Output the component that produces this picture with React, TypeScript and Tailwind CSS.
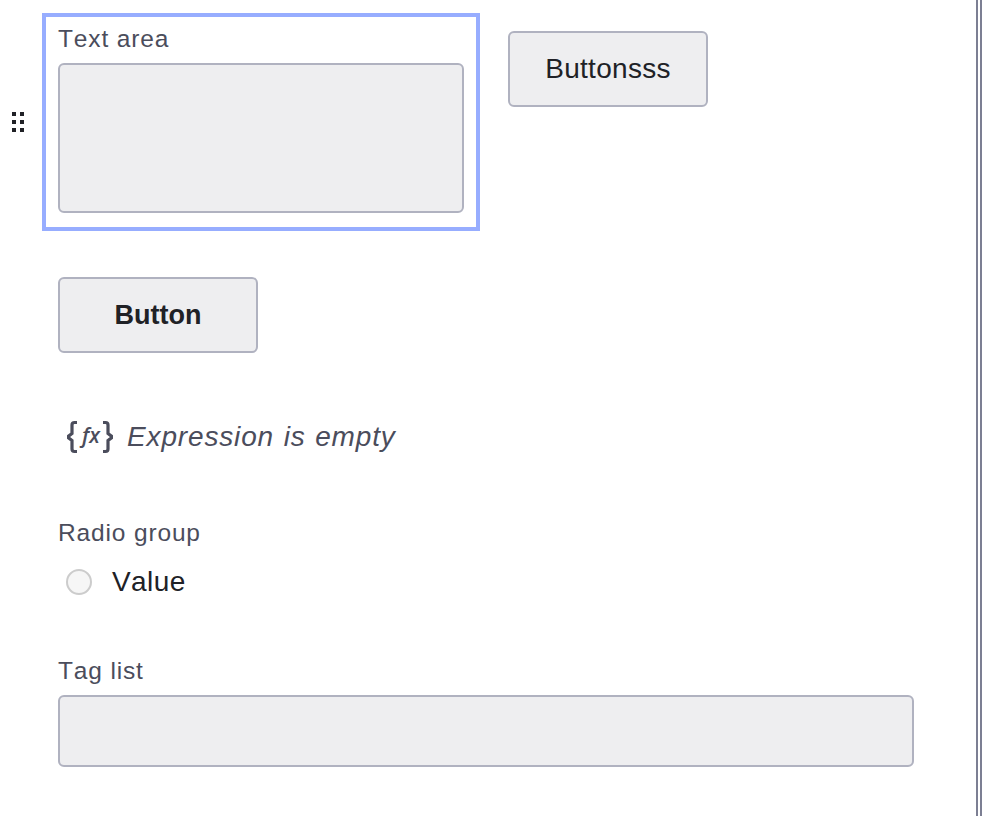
import type { ReactNode } from "react";

function Label({ children }: { children: ReactNode }) {
  return (
    <div className="h-8 text-[24.5px] leading-8 tracking-[0.85px] whitespace-nowrap text-[#4b4d5c] [font-kerning:none]">
      {children}
    </div>
  );
}

function DragHandle() {
  return (
    <div className="grid grid-cols-2 gap-1">
      {[0, 1, 2, 3, 4, 5].map((i) => (
        <span key={i} className="size-1 bg-[#202126]" />
      ))}
    </div>
  );
}

function ExpressionIcon() {
  return (
    <svg width="46" height="34" viewBox="0 0 46 34" fill="none" className="shrink-0">
      <path
        d="M10 2.5H7.5Q5 2.5 5 5V13.5L1.5 16.2V17.8L5 20.5V29Q5 31.5 7.5 31.5H10M36 2.5H38.5Q41 2.5 41 5V13.5L44.5 16.2V17.8L41 20.5V29Q41 31.5 38.5 31.5H36"
        stroke="#4b4d5c"
        strokeWidth="3.2"
      />
      <text x="15" y="23" className="fill-[#4b4d5c] font-['Open_Sans',sans-serif] text-[21px] font-semibold italic">
        fx
      </text>
    </svg>
  );
}

export default function App() {
  return (
    <div className="flex h-[816px] w-[982px] overflow-hidden bg-white font-['Liberation_Sans',Arial,sans-serif] text-[#202126]">
      <main className="flex w-[976px] flex-col items-start pt-[13px]">
        <div className="flex items-start">
          <div className="flex h-[218px] w-[42px] items-center pl-3">
            <DragHandle />
          </div>
          <section className="h-[218px] w-[438px] border-4 border-[#97adff] px-3 pt-[6px]">
            <Label>Text area</Label>
            <div className="mt-2 h-[150px] rounded-[6px] border-2 border-[#b0b2c0] bg-[#eeeef0]" />
          </section>
          <button className="mt-[18px] ml-7 flex h-[76px] w-[200px] items-center justify-center rounded-[6px] border-2 border-[#b0b2c0] bg-[#eeeef0] text-[28px] tracking-[0.3px]">
            Buttonsss
          </button>
        </div>
        <button className="mt-[46px] ml-[58px] flex h-[76px] w-[200px] items-center justify-center rounded-[6px] border-2 border-[#b0b2c0] bg-[#eeeef0] text-[27px] font-bold">
          Button
        </button>
        <div className="mt-[67px] ml-[67px] flex h-[34px] items-center gap-[14px] text-[28px] text-[#4b4d5c]">
          <ExpressionIcon />
          <span className="tracking-[0.85px] whitespace-nowrap italic [word-spacing:1px]">Expression is empty</span>
        </div>
        <section className="mt-[63px] ml-[58px]">
          <Label>Radio group</Label>
          <div className="mt-[15px] flex h-9 items-center gap-5 pl-2">
            <span className="size-[26px] rounded-full border-2 border-[#cccccc] bg-[#f6f6f6]" />
            <span className="text-[28px] leading-9 tracking-[0.4px] [font-kerning:none]">Value</span>
          </div>
        </section>
        <section className="mt-[55px] ml-[58px] w-[856px]">
          <Label>Tag list</Label>
          <div className="mt-2 h-[72px] rounded-[6px] border-2 border-[#b0b2c0] bg-[#eeeef0]" />
        </section>
      </main>
      <div className="h-full w-[6px] border-x-2 border-[#7c7f93]" />
    </div>
  );
}
